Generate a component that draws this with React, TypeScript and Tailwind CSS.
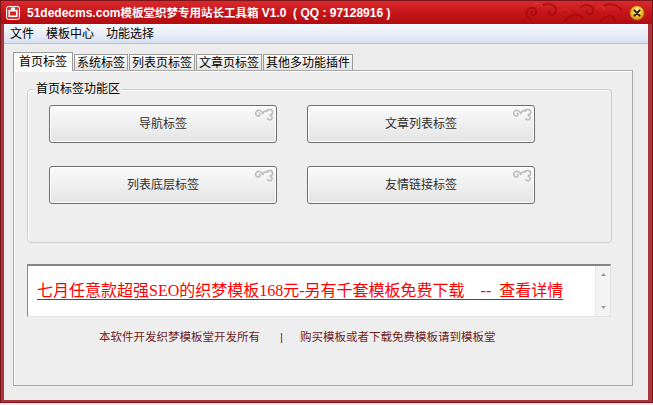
import React from "react";

function Ornament() {
  return (
    <svg width="21" height="13" viewBox="0 0 21 13" fill="none" stroke="#b9b9b9" strokeWidth="1.5" strokeLinecap="round">
      <path d="M8.5 5.5 C8 2.5 4.5 1.5 2.6 3.2 C0.8 4.8 1.6 8 4.2 8 C6 8 6.6 6 5.2 5.2" />
      <path d="M8.5 5.5 C10 3 12 2.5 13.5 3.2" />
      <path d="M13 2.2 C15.5 0.8 19 1.8 18.6 4.6 C18.3 6.6 16.5 7 15.6 7 C17.8 7.4 19 9.5 17.5 11.2 C16.2 12.4 14 11.8 13.6 10.4" />
    </svg>
  );
}

function Btn({ label }: { label: string }) {
  return (
    <div className="relative w-[228px] h-[38px] rounded-[3px] border border-[#6e6e6e] bg-gradient-to-b from-[#fafafa] to-[#e4e4e4] shadow-[inset_0_0_0_1px_#ffffff] flex items-center justify-center text-[12px] text-[#2e2e2e]">
      <span>{label}</span>
      <div className="absolute right-[1px] top-[2px]">
        <Ornament />
      </div>
    </div>
  );
}

function TitleSwirls() {
  return (
    <svg width="104" height="23" viewBox="0 0 104 23" fill="none" strokeLinecap="round">
      <g stroke="#9c070c" strokeWidth="2" opacity="0.6">
        <path d="M10 18 C4 16 4 8 10 7 C15 6 17 12 13 14 C10 15 9 12 11 11" />
        <path d="M22 4 C30 1 38 6 34 12 C31 16 26 13 28 10" />
        <path d="M44 20 C50 12 60 12 62 18" />
        <path d="M60 6 C66 2 74 5 72 11 C70 15 65 13 66 10" />
        <path d="M80 20 C84 14 92 14 94 19" />
        <path d="M84 4 C90 2 98 4 100 9" />
      </g>
      <g stroke="#e25050" strokeWidth="1" opacity="0.5">
        <path d="M14 3 C18 1 22 3 21 6" />
        <path d="M40 10 C44 6 50 8 48 12" />
        <path d="M76 8 C78 4 84 5 83 9" />
      </g>
    </svg>
  );
}

function CloseBtn() {
  return (
    <svg width="16" height="16" viewBox="0 0 16 16">
      <defs>
        <radialGradient id="cg" cx="50%" cy="35%" r="65%">
          <stop offset="0" stopColor="#fff5b0" />
          <stop offset="0.5" stopColor="#f6c531" />
          <stop offset="1" stopColor="#d8850d" />
        </radialGradient>
      </defs>
      <circle cx="8" cy="8" r="7.3" fill="url(#cg)" stroke="#8a4a10" strokeWidth="0.8" />
      <path d="M5.4 5.4 L10.6 10.6 M10.6 5.4 L5.4 10.6" stroke="#2a1a10" strokeWidth="2" strokeLinecap="round" />
    </svg>
  );
}

function AppIcon() {
  return (
    <svg width="14" height="14" viewBox="0 0 14 14">
      <rect x="0.5" y="0.5" width="13" height="13" rx="2" fill="#e23434" stroke="#ffffff" />
      <rect x="2.5" y="4" width="9" height="7" fill="#ffffff" />
      <rect x="4" y="5.5" width="6" height="4" fill="#d42424" />
      <rect x="5" y="1.5" width="4" height="3" fill="#ffffff" />
    </svg>
  );
}

export default function App() {
  const tabs = ["系统标签", "列表页标签", "文章页标签", "其他多功能插件"];
  return (
    <div className="w-[653px] h-[405px] overflow-hidden bg-[#efe6e6] font-['Liberation_Sans','Noto_Sans_CJK_SC',sans-serif]">
      <div className="h-[403px] flex flex-col border border-[#7a1519] bg-[#a9343a]">
        {/* Title bar */}
        <div className="h-[23px] flex items-center bg-gradient-to-b from-[#d9292c] via-[#c6151a] to-[#b20c10] pl-[5px] pr-[7px]">
          <AppIcon />
          <div className="ml-[7px] text-white font-bold flex items-baseline whitespace-pre">
            <span className="text-[12px]">51dedecms.com</span>
            <span className="text-[11.5px] font-['Noto_Sans_CJK_SC',sans-serif]">模板堂织梦专用站长工具箱</span>
            <span className="text-[12px]"> V1.0  ( QQ : 97128916 )</span>
          </div>
          <div className="flex-1" />
          <TitleSwirls />
          <div className="ml-[4px] mt-[1px]">
            <CloseBtn />
          </div>
        </div>

        {/* Body */}
        <div className="flex-1 ml-[3px] mr-[4px] mb-[2px] bg-[#ececec] flex flex-col">
          {/* Menu bar */}
          <div className="h-[20px] flex items-center pt-[1px] bg-gradient-to-b from-[#f8faff] to-[#d8e1f1] border-b border-[#b7c1d4] text-[12px] text-black">
            <span className="px-[6px]">文件</span>
            <span className="px-[6px]">模板中心</span>
            <span className="px-[6px]">功能选择</span>
          </div>

          {/* Tabs */}
          <div className="flex items-end pl-[9px] pt-[8px] text-[12px] text-black">
            <div className="relative z-10 -mb-px h-[19px] px-[5px] flex items-center bg-[#fbfbfb] border border-b-0 border-[#9a9a9a]">
              首页标签
            </div>
            <div className="flex items-end gap-[1px] ml-[1px]">
              {tabs.map((t) => (
                <div
                  key={t}
                  className="h-[16px] px-[2px] flex items-center bg-gradient-to-b from-[#fdfdfd] to-[#e3e3e3] border border-b-0 border-[#9a9a9a]"
                >
                  {t}
                </div>
              ))}
            </div>
          </div>

          {/* Panel */}
          <div className="flex-1 ml-[9px] mr-[15px] mb-[14px] border border-[#a9a9a9] bg-[#eeeeee] shadow-[inset_1px_1px_0_#ffffff] flex flex-col">
            {/* Group box */}
            <div className="relative mt-[18px] ml-[13px] w-[585px] h-[154px] rounded-[4px] border border-[#cdcdcd] shadow-[inset_1px_1px_0_#ffffff]">
              <span className="absolute left-[7px] -top-[9px] px-[1px] bg-[#eeeeee] text-[12px] leading-[16px] text-black">
                首页标签功能区
              </span>
              <div className="grid grid-cols-[228px_228px] gap-x-[30px] gap-y-[23px] pl-[21px] pt-[15px]">
                <Btn label="导航标签" />
                <Btn label="文章列表标签" />
                <Btn label="列表底层标签" />
                <Btn label="友情链接标签" />
              </div>
            </div>

            {/* Text box */}
            <div className="mt-[21px] ml-[13px] w-[584px] h-[53px] flex bg-white border-t-2 border-l border-t-[#858585] border-l-[#8a8a8a] border-b border-r border-b-[#e2e2e2] border-r-[#e2e2e2]">
              <div className="flex-1 flex items-center pl-[9px]">
                <span className="whitespace-pre text-[16px] text-[#ff0000] underline underline-offset-[3px] font-['Liberation_Serif','Noto_Sans_CJK_SC',serif]">
                  {"七月任意款超强SEO的织梦模板168元-另有千套模板免费下载    --  查看详情"}
                </span>
              </div>
              <div className="w-[15px] bg-[#f3f3f3] border-l border-[#e6e6e6] flex flex-col items-center justify-between py-[7px]">
                <svg width="5" height="3" viewBox="0 0 5 3">
                  <path d="M0 3 L2.5 0 L5 3 Z" fill="#9a9a9a" />
                </svg>
                <svg width="5" height="3" viewBox="0 0 5 3">
                  <path d="M0 0 L5 0 L2.5 3 Z" fill="#9a9a9a" />
                </svg>
              </div>
            </div>

            {/* Footer */}
            <div className="mt-[12px] pl-[85px] flex items-center text-[11.5px] leading-[16px] text-[#6e1d1d]">
              <span>本软件开发织梦模板堂开发所有</span>
              <span className="ml-[20px]">|</span>
              <span className="ml-[17px]">购买模板或者下载免费模板请到模板堂</span>
            </div>
          </div>
        </div>
      </div>
    </div>
  );
}
